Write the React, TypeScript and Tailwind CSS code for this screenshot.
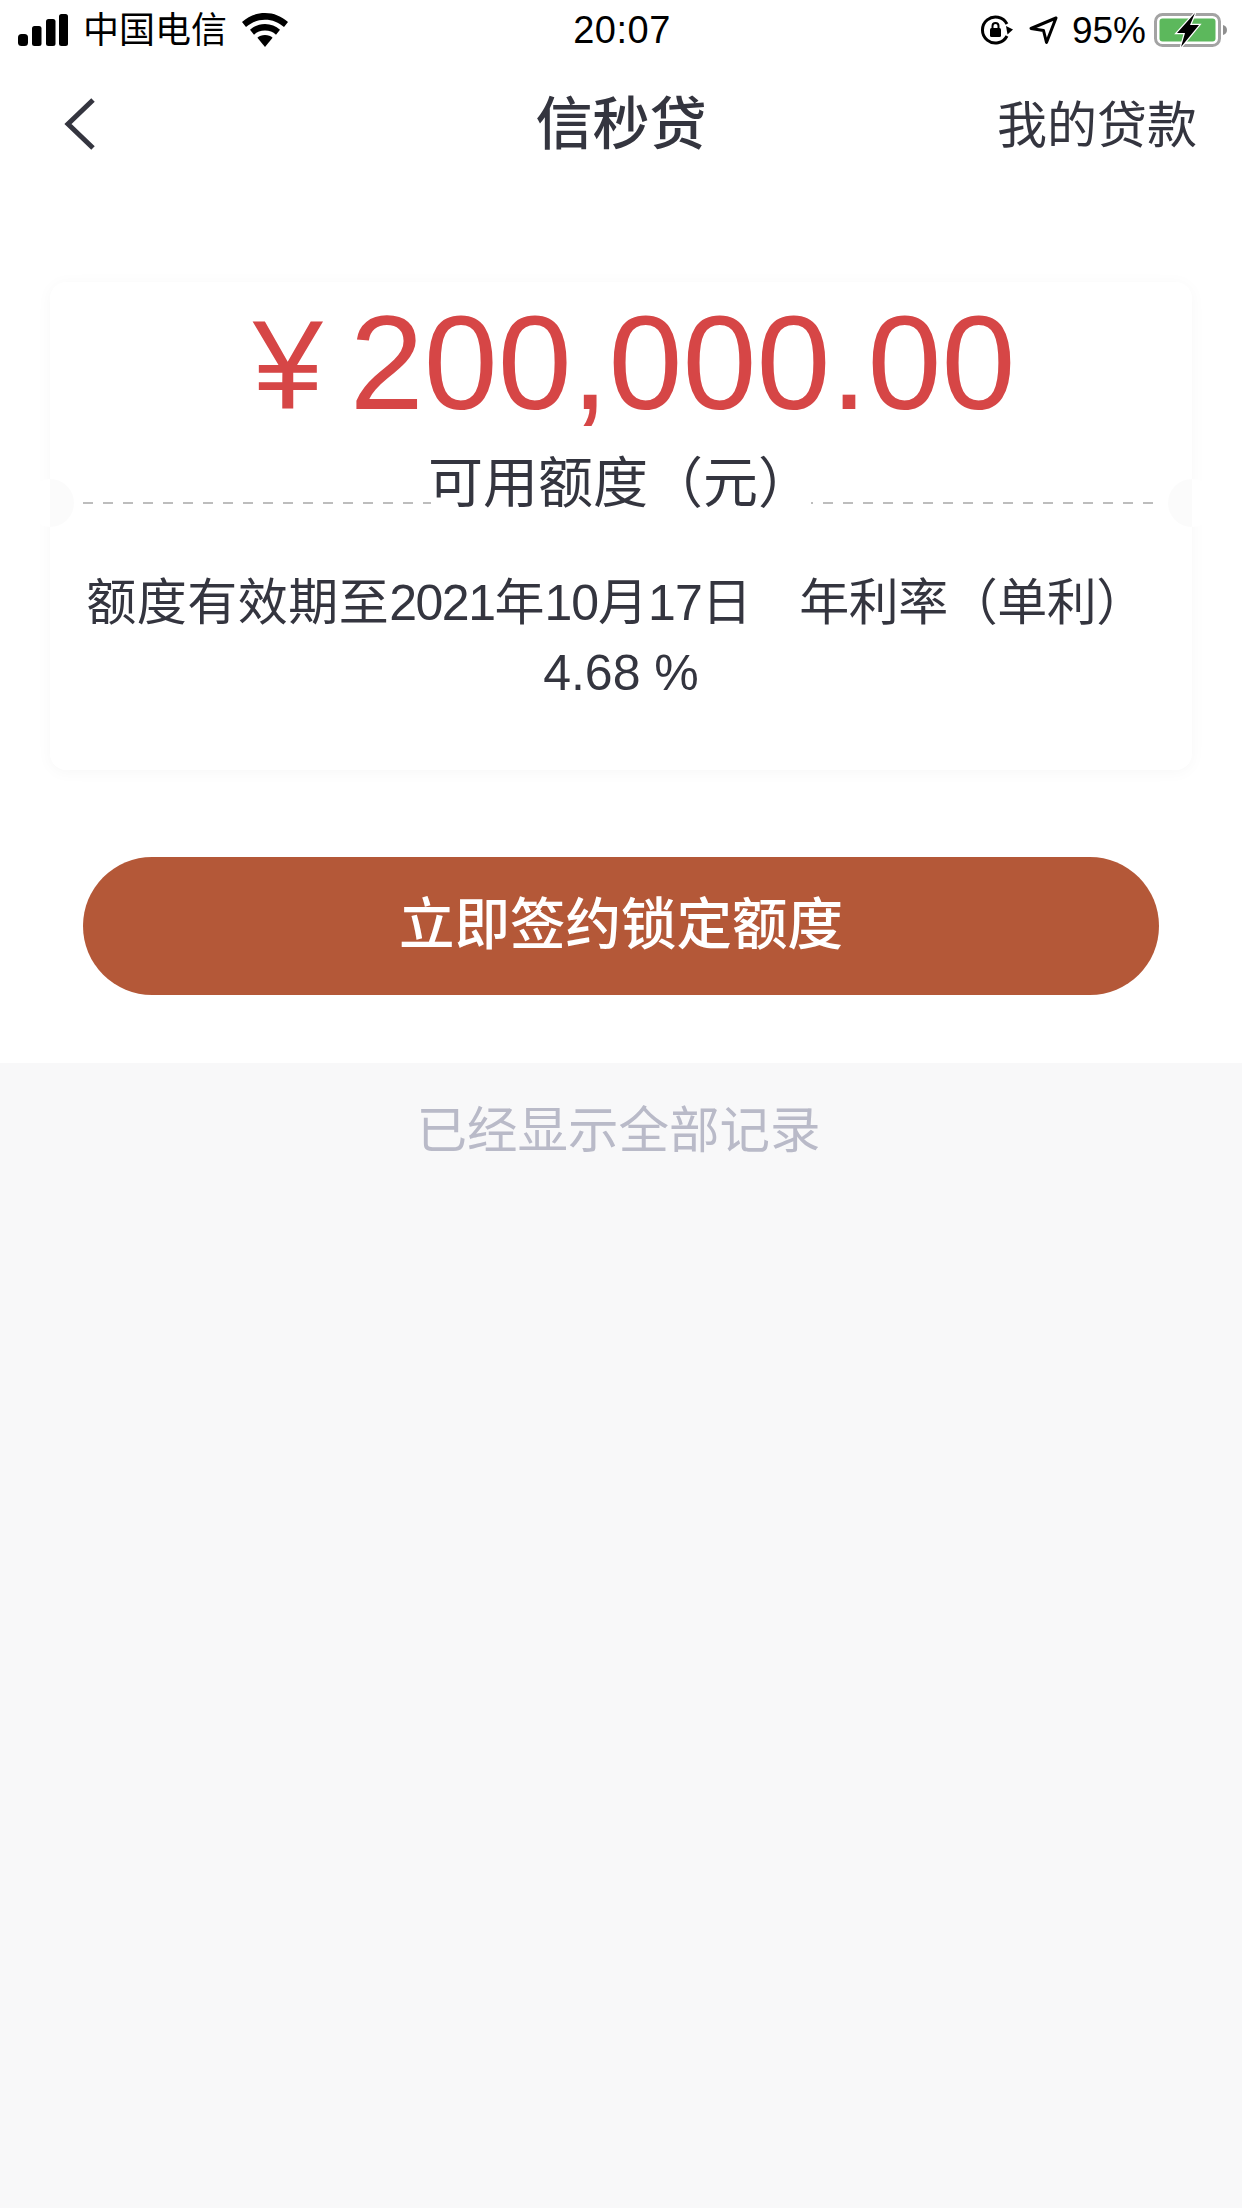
import React from 'react';

const font = 'font-["Liberation_Sans","Noto_Sans_CJK_SC",sans-serif]';

const StatusBar: React.FC = () => (
  <div className="flex h-[60px] items-center justify-between pl-[18px] pr-[14px] text-black">
    <div className="flex w-[400px] items-center">
      {/* signal */}
      <svg width="50" height="32" viewBox="0 0 50 32" fill="#000">
        <rect x="0" y="20" width="10" height="12" rx="3.500" />
        <rect x="14" y="12" width="9.500" height="20" rx="2.500" />
        <rect x="28" y="5" width="9.500" height="27" rx="2.500" />
        <rect x="41" y="0" width="9" height="32" rx="2.500" />
      </svg>
      <span className="ml-[15px] mt-[1px] text-[36px] leading-none">中国电信</span>
      <svg className="ml-[15px]" width="46" height="34" viewBox="0 0 46 34" fill="#000">
        <path d="M23 0C14 0 6.500 3.400 0 9l4 5c5.300-4.600 11.600-7.300 19-7.300S36.700 9.400 42 14l4-5C39.500 3.400 32 0 23 0z" />
        <path d="M23 11c-6 0-10.800 2.100-15 5.700l4 5c3-2.600 6.600-4.100 11-4.100s8 1.500 11 4.100l4-5C33.800 13.100 29 11 23 11z" />
        <path d="M23 22c-3.200 0-5.700 1-7.600 2.700L23 34l7.600-9.300C28.700 23 26.200 22 23 22z" />
      </svg>
    </div>
    <span className="pr-[2px] text-[38px] leading-none tracking-[0.5px]">20:07</span>
    <div className="flex w-[400px] items-center justify-end">
      {/* orientation lock */}
      <svg width="34" height="30" viewBox="0 0 34 30" fill="none">
        <path d="M27 21A13 13 0 1 1 27 9" stroke="#000" strokeWidth="3" />
        <path d="M26 11l7 3.500-5.500 5z" fill="#000" />
        <rect x="10" y="13" width="11" height="9" rx="1.500" fill="#000" />
        <path d="M12.500 13.500V11a3 3 0 0 1 6 0v2.500" stroke="#000" strokeWidth="2" />
      </svg>
      {/* location */}
      <svg className="ml-[15px]" width="29" height="29" viewBox="0 0 29 29" fill="none">
        <path d="M27 2L2 12.500l12.500 2 3 12z" stroke="#000" strokeWidth="3" strokeLinejoin="round" />
      </svg>
      <span className="ml-[14px] text-[37px] leading-none">95%</span>
      <svg className="ml-[8px]" width="74" height="36" viewBox="0 0 74 36" fill="none">
        <rect x="1.500" y="2.500" width="64" height="31" rx="7" stroke="#a3a3a3" strokeWidth="3" />
        <rect x="5.500" y="6.500" width="56" height="23" rx="3" fill="#5cb85c" />
        <path d="M69 13c2.500.6 4 2.500 4 5s-1.500 4.400-4 5z" fill="#8f8f8f" />
        <path d="M41 1L23 21h8l-4 14 18-22h-9z" fill="#000" stroke="#fff" strokeWidth="2.500" paintOrder="stroke" />
      </svg>
    </div>
  </div>
);

const NavBar: React.FC = () => (
  <div className="relative flex h-[128px] items-center justify-between pl-[64px] pr-[45px] text-[#34353f]">
    <svg width="32" height="52" viewBox="0 0 32 52" fill="none">
      <path d="M29 2L4 26l25 24" stroke="#34353f" strokeWidth="5" />
    </svg>
    <span className="absolute left-0 right-0 text-center text-[57px] font-medium leading-none">信秒贷</span>
    <span className="mt-[3px] text-[50px] leading-none">我的贷款</span>
  </div>
);

const QuotaCard: React.FC = () => (
  <div className="relative mx-[50px] mt-[94px] h-[488px] rounded-[16px] bg-white shadow-[0_2px_16px_rgba(0,0,0,0.035)]">
    {/* amount + label */}
    <div className="relative flex h-[226px] flex-col items-center overflow-hidden">
      <div className="mt-[18px] flex items-baseline whitespace-nowrap pl-[26px] leading-[126px] text-[#d64646]">
        <span className="text-[126px]">¥</span>
        <span className="ml-[27px] text-[133px]">200,000.00</span>
      </div>
      {/* dashed perforation, the label sits on top of it */}
      <div className="absolute bottom-[4px] left-[33px] right-[35px] h-[2px] bg-[repeating-linear-gradient(90deg,#bdbdbd_0_10px,transparent_10px_20px)]" />
      <div className="relative mt-[19px] w-[380px] whitespace-nowrap bg-white indent-[-3px] text-[55px] leading-[70px] text-[#34353f]">
        可用额度（元）
      </div>
    </div>
    {/* notches */}
    <div className="absolute left-[-24px] top-[197px] h-[48px] w-[48px] rounded-full bg-[linear-gradient(90deg,#ffffff_50%,#fbfbfb_50%)]" />
    <div className="absolute right-[-24px] top-[197px] h-[48px] w-[48px] rounded-full bg-[linear-gradient(270deg,#ffffff_50%,#fbfbfb_50%)]" />
    <div className="px-[30px] pt-[60px] text-center text-[50px] leading-[70px] text-[#34353f]">
      <div className="whitespace-pre pr-[10px]">
        <span className="tracking-[0.5px]">额度有效期至</span>
        <span className="tracking-[-1.500px]">2021</span>年<span className="tracking-[-1px]">10</span>月
        <span className="tracking-[-1px]">17</span>日<span className="tracking-[-2px]">    </span>
        <span className="tracking-[-0.500px]">年利率（单利）</span>
      </div>
      <div>4.68 %</div>
    </div>
  </div>
);

export default function App() {
  return (
    <div className={`${font} min-h-[2208px] w-[1242px] bg-[#f8f8f9]`}>
      <div className="h-[1063px] bg-white">
        <StatusBar />
        <NavBar />
        <QuotaCard />
        <button className="mx-[83px] mt-[87px] flex h-[138px] w-[1076px] items-center justify-center rounded-full bg-[#b45838] text-[55.500px] font-medium text-white">
          立即签约锁定额度
        </button>
      </div>
      <div className="pr-[5px] pt-[33px] text-center text-[50.500px] leading-[70px] text-[#b9bac8]">已经显示全部记录</div>
    </div>
  );
}
